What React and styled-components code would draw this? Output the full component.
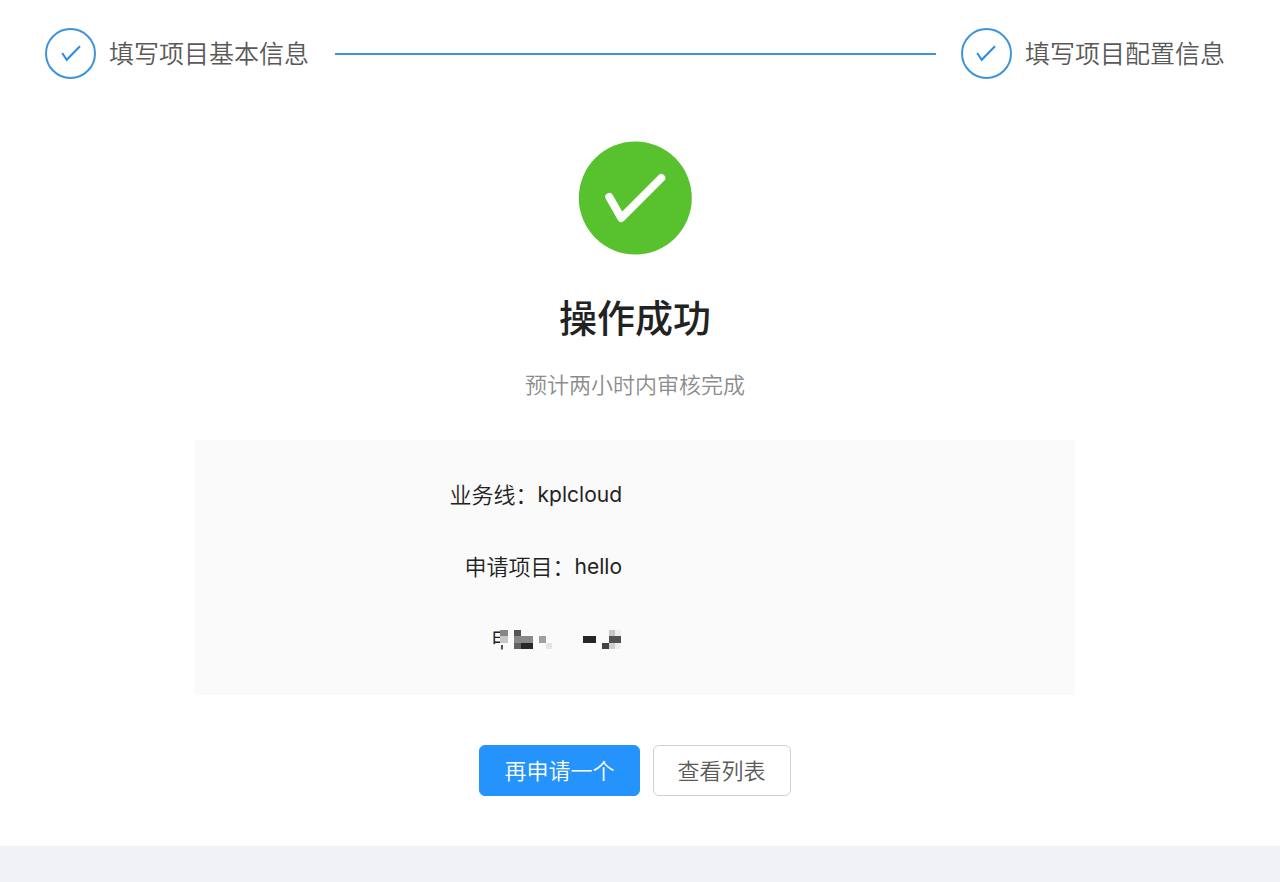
import styled, { createGlobalStyle } from "styled-components";

const steps = ["填写项目基本信息", "填写项目配置信息"];

const details = [
  { label: "业务线：", value: "kplcloud" },
  { label: "申请项目：", value: "hello" },
];

// [x, y, width, height, color]
const mosaic = [
  [0, 0, 8, 6.3, "#858585"],
  [0, 6.3, 8, 6.3, "#c6c6c6"],
  [14.3, 0, 6.2, 6.3, "#555555"],
  [14.3, 6.3, 18.7, 6.3, "#888888"],
  [14.3, 12.6, 6.2, 6.4, "#626262"],
  [20.5, 12.6, 12.5, 6.4, "#282828"],
  [39.3, 6.3, 6.2, 6.3, "#a0a0a0"],
  [45.7, 12.6, 6.3, 6.4, "#e5e5e5"],
  [83.3, 6.3, 12.7, 6.3, "#262626"],
  [108.7, 0, 6, 6.3, "#c6c6c6"],
  [114.7, 0, 6.3, 6.3, "#ededed"],
  [108.7, 6.3, 12.3, 6.3, "#525252"],
  [102.3, 12.6, 6.4, 6.4, "#424242"],
  [108.7, 12.6, 6, 6.4, "#cecece"],
  [114.7, 12.6, 6.3, 6.4, "#eeeeee"],
];

const App = () => {
  return (
    <>
      <GlobalStyle />
      <StyledPage>
        <StyledSteps>
          {steps.map((title) => (
            <StyledStep key={title}>
              <StyledStepIcon>
                <svg width="20" height="18" viewBox="0 0 20 18" aria-hidden="true">
                  <path d="M1.2 8 L5.7 14.8 L19 1.2" />
                </svg>
              </StyledStepIcon>
              {title}
            </StyledStep>
          ))}
        </StyledSteps>

        <StyledResult>
          <StyledSuccess viewBox="0 0 114 114" aria-hidden="true">
            <circle cx="57.3" cy="57" r="56.5" />
            <path d="M31.3 56 L43.3 77 L83.3 37" />
          </StyledSuccess>
          <h1>操作成功</h1>
          <p>预计两小时内审核完成</p>
        </StyledResult>

        <StyledPanel>
          <StyledDetails>
            {details.map((item) => (
              <StyledRow key={item.label}>
                <dt>{item.label}</dt>
                <dd>{item.value}</dd>
              </StyledRow>
            ))}
            <StyledRow>
              <dt>申</dt>
              <StyledMasked>
                <svg width="122" height="26" viewBox="0 -4 122 26" aria-hidden="true">
                  <path d="M0 -4 H122 V22 H3 V15 H0 Z" fill="#fafafa" />
                  {mosaic.map(([x, y, width, height, fill]) => (
                    <rect key={`${x}-${y}`} x={x} y={y} width={width} height={height} fill={fill} />
                  ))}
                </svg>
              </StyledMasked>
            </StyledRow>
          </StyledDetails>
        </StyledPanel>

        <StyledActions>
          <StyledButton type="button" $primary>
            再申请一个
          </StyledButton>
          <StyledButton type="button">查看列表</StyledButton>
        </StyledActions>
      </StyledPage>
    </>
  );
};

export default App;

const GlobalStyle = createGlobalStyle`
  * {
    box-sizing: border-box;
    margin: 0;
    padding: 0;
  }

  body {
    background-color: #f0f2f5;
    color: #222222;
    font-family: Inter, "Noto Sans CJK SC", sans-serif;
    font-size: 22px;
    font-weight: 350;
    line-height: 32px;
  }
`;

const StyledPage = styled.main`
  display: flex;
  flex-direction: column;
  align-items: center;
  padding: 28px 55px 50px 45px;
  background-color: #ffffff;
`;

const StyledSteps = styled.ol`
  display: flex;
  width: 100%;
  list-style: none;
`;

const StyledStep = styled.li`
  display: flex;
  align-items: center;
  gap: 13px;
  color: #595959;
  font-size: 25px;
  white-space: nowrap;

  &:not(:last-child) {
    flex: 1;
  }

  &:not(:last-child)::after {
    content: "";
    flex: 1;
    height: 2px;
    margin: 0 25px 0 13px;
    background-color: #3d94dc;
  }
`;

const StyledStepIcon = styled.span`
  display: flex;
  align-items: center;
  justify-content: center;
  width: 51px;
  height: 51px;
  border: 2px solid #3d94dc;
  border-radius: 50%;

  & path {
    fill: none;
    stroke: #2e8ce0;
    stroke-width: 2;
  }
`;

const StyledResult = styled.section`
  display: flex;
  flex-direction: column;
  align-items: center;
  padding-top: 62px;

  & h1 {
    margin-top: 38px;
    font-size: 38px;
    font-weight: 500;
    line-height: 50px;
  }

  & p {
    margin-top: 26px;
    color: #8c8c8c;
  }
`;

const StyledSuccess = styled.svg`
  width: 114px;
  height: 114px;

  & circle {
    fill: #58c22e;
  }

  & path {
    fill: none;
    stroke: #ffffff;
    stroke-width: 8;
    stroke-linecap: round;
    stroke-linejoin: round;
  }
`;

const StyledPanel = styled.section`
  width: 100%;
  max-width: 880px;
  margin-top: 39px;
  padding: 39px 0 40px;
  background-color: #fafafa;
`;

const StyledDetails = styled.dl`
  display: flex;
  flex-direction: column;
  gap: 40px;
  width: 50%;
  padding-right: 13px;
`;

const StyledRow = styled.div`
  display: flex;
  align-items: center;
  justify-content: flex-end;
  height: 32px;

  & dd {
    font-size: 21px;
    font-weight: 400;
  }
`;

const StyledMasked = styled.dd`
  display: flex;
  margin-left: -13px;

  & svg {
    shape-rendering: crispEdges;
  }
`;

const StyledActions = styled.div`
  display: flex;
  gap: 13px;
  margin-top: 50px;
`;

const StyledButton = styled.button`
  height: 51px;
  padding: 0 24px;
  border: 1px solid ${({ $primary }) => ($primary ? "#2593fc" : "#d0d0d0")};
  border-radius: 6px;
  background-color: ${({ $primary }) => ($primary ? "#2593fc" : "#ffffff")};
  color: ${({ $primary }) => ($primary ? "#ffffff" : "#595959")};
  font: inherit;
  cursor: pointer;
`;
